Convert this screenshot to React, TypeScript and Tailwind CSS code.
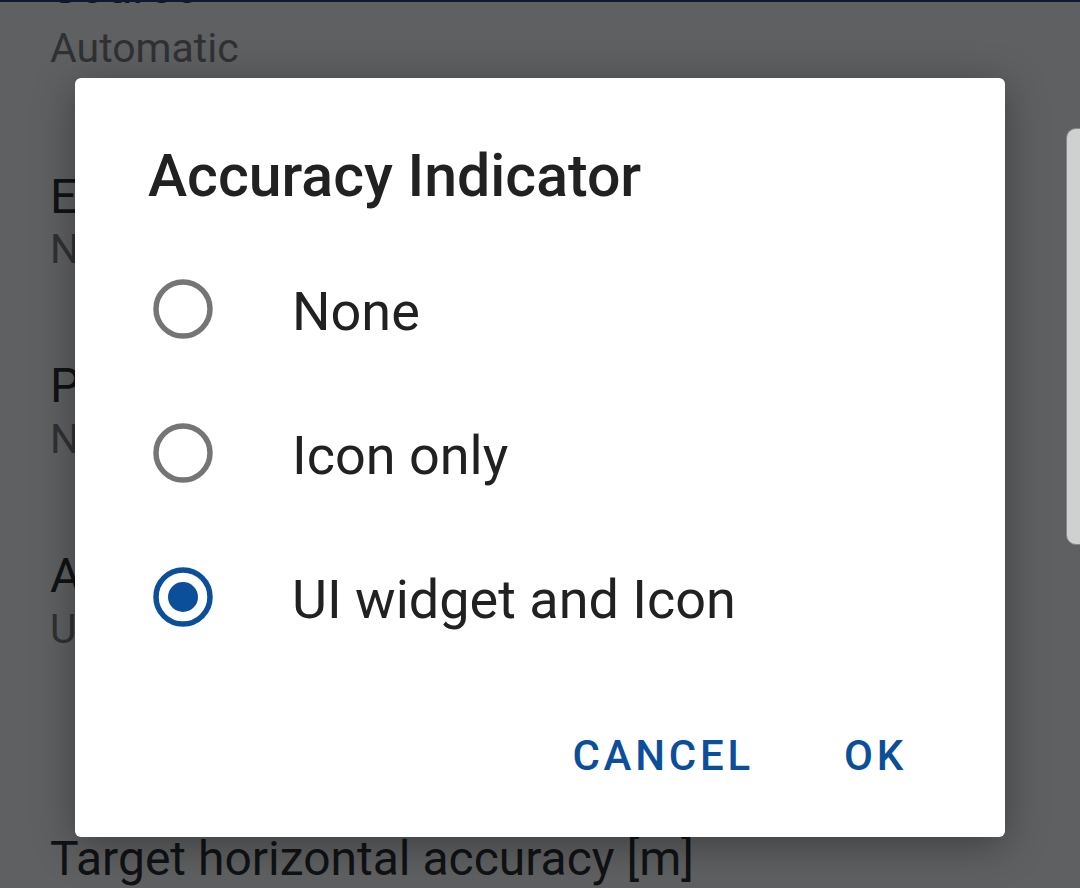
import React from 'react';

const options = ['None', 'Icon only', 'UI widget and Icon'];

function Radio({ checked }: { checked: boolean }) {
  return (
    <svg width="60" height="60" viewBox="0 0 60 60" aria-hidden>
      <circle
        cx="30"
        cy="30"
        r="27"
        fill="none"
        stroke={checked ? '#0b4f9b' : '#757575'}
        strokeWidth="5.5"
      />
      {checked && <circle cx="30" cy="30" r="15" fill="#0b4f9b" />}
    </svg>
  );
}

export default function App() {
  const selected = 2;

  return (
    <div className="relative h-[888px] w-[1080px] overflow-hidden bg-[#5f6062] font-['Roboto','Liberation_Sans',sans-serif]">
      {/* preference list behind the dialog */}
      <div className="flex flex-col px-[50px]">
        <div className="mt-[-41px] text-[48px] leading-[56px] text-[#111214]">Source</div>
        <div className="mt-[9px] text-[41px] leading-[48px] text-[#303133]">Automatic</div>

        <div className="mt-[97px] text-[48px] leading-[56px] text-[#111214]">Elevation source</div>
        <div className="mt-0 text-[41px] leading-[48px] text-[#303133]">None</div>

        <div className="mt-[85px] text-[48px] leading-[56px] text-[#111214]">Position format</div>
        <div className="mt-[1px] text-[41px] leading-[48px] text-[#303133]">None</div>

        <div className="mt-[85px] text-[48px] leading-[56px] text-[#111214]">Accuracy Indicator</div>
        <div className="mt-[1px] text-[41px] leading-[48px] text-[#303133]">UI widget and Icon</div>

        <div className="mt-[178px] whitespace-nowrap text-[48px] leading-[56px] text-[#111214]">
          Target horizontal accuracy [m]
        </div>
      </div>

      {/* toolbar edge behind the scrim */}
      <div className="absolute left-0 top-0 h-[2px] w-full bg-[#0c1b33]" />

      {/* scroll thumb on the right */}
      <div className="absolute left-[1066px] top-[128px] h-[417px] w-[30px] rounded-l-[10px] border border-[#85878a] bg-[#cfd0d0]" />

      {/* dialog */}
      <div className="absolute left-[75px] top-[78px] flex h-[759px] w-[930px] flex-col rounded-[6px] bg-white shadow-[0_8px_40px_rgba(0,0,0,0.35)]">
        <h1 className="mt-[64px] pl-[73px] text-[59px] font-medium leading-[68px] text-[#212121]">
          Accuracy Indicator
        </h1>

        <div className="mt-[27px] flex flex-col">
          {options.map((label, i) => (
            <div key={label} className="flex h-[144px] items-center pl-[78px]">
              <Radio checked={i === selected} />
              <span className="ml-[79px] mt-[5px] text-[54px] leading-[60px] text-[#212121]">{label}</span>
            </div>
          ))}
        </div>

        <div className="mt-[37px] flex h-[96px] items-center justify-end gap-[90px] pr-[98px]">
          <button className="mt-[3px] text-[42px] font-medium uppercase tracking-[0.09em] text-[#0b4f9b]">
            Cancel
          </button>
          <button className="mt-[3px] text-[42px] font-medium uppercase tracking-[0.09em] text-[#0b4f9b]">
            OK
          </button>
        </div>
      </div>
    </div>
  );
}
